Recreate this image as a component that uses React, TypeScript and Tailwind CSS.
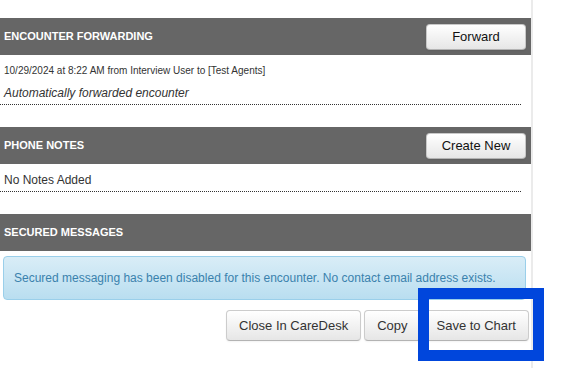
import type { ReactNode } from "react";

type SectionBarProps = {
  title: string;
  action?: string;
};

function HeaderButton({ children }: { children: ReactNode }) {
  return (
    <button
      type="button"
      className="h-[26px] w-[100px] rounded-[4px] border border-[#c8c8c8] border-b-[#b3b3b3] bg-gradient-to-b from-white to-[#e6e6e6] text-[13px] leading-none text-[#111] shadow-[0_1px_2px_rgba(0,0,0,0.08)]"
    >
      {children}
    </button>
  );
}

function FooterButton({ children }: { children: ReactNode }) {
  return (
    <button
      type="button"
      className="h-[31px] rounded-[4px] border border-[#cccccc] border-b-[#b3b3b3] bg-gradient-to-b from-white to-[#e6e6e6] px-3 text-[13px] leading-none text-[#333] shadow-[0_1px_2px_rgba(0,0,0,0.05)]"
    >
      {children}
    </button>
  );
}

function SectionBar({ title, action }: SectionBarProps) {
  return (
    <div className="flex h-[37px] items-center justify-between bg-[#666666] pl-[4px] pr-[5px]">
      <h2 className="text-[11px] font-bold uppercase text-white">{title}</h2>
      {action ? <HeaderButton>{action}</HeaderButton> : null}
    </div>
  );
}

export default function App() {
  return (
    <div
      className="relative h-[368px] w-[568px] overflow-hidden bg-white"
      style={{ fontFamily: '"Liberation Sans", Arial, sans-serif' }}
    >
      <div className="h-full w-[533px] border-r-2 border-[#ebebeb] pt-[18px]">
        <SectionBar title="Encounter Forwarding" action="Forward" />
        <div className="mr-[10px] border-b border-dotted border-[#333] pb-[3px] pl-[4px] pt-[10px] text-[#333]">
          <p className="text-[10px] leading-[12px]">
            10/29/2024 at 8:22 AM from Interview User to [Test Agents]
          </p>
          <p className="mt-[8px] text-[12px] italic leading-[16px]">
            Automatically forwarded encounter
          </p>
        </div>

        <div className="mt-[22px]">
          <SectionBar title="Phone Notes" action="Create New" />
        </div>
        <div className="mr-[10px] border-b border-dotted border-[#333] pb-[3px] pl-[4px] pt-[8px] text-[#333]">
          <p className="text-[12px] leading-[16px]">No Notes Added</p>
        </div>

        <div className="mt-[22px]">
          <SectionBar title="Secured Messages" />
        </div>
        <div className="ml-[3px] mr-[5px] mt-[5px] flex h-[44px] items-center rounded-[4px] border border-[#9acfea] bg-gradient-to-b from-[#d9edf7] to-[#b9def0] pl-[10px] text-[12px] text-[#3a82ad]">
          Secured messaging has been disabled for this encounter. No contact
          email address exists.
        </div>

        <div className="mr-[2px] mt-[10px] flex justify-end gap-[3px]">
          <FooterButton>Close In CareDesk</FooterButton>
          <FooterButton>Copy</FooterButton>
          <FooterButton>Save to Chart</FooterButton>
        </div>
      </div>

      {/* highlight box drawn over the save button */}
      <div className="absolute left-[418px] top-[288px] h-[73px] w-[126px] border-[11px] border-[#0046dc]" />
    </div>
  );
}
